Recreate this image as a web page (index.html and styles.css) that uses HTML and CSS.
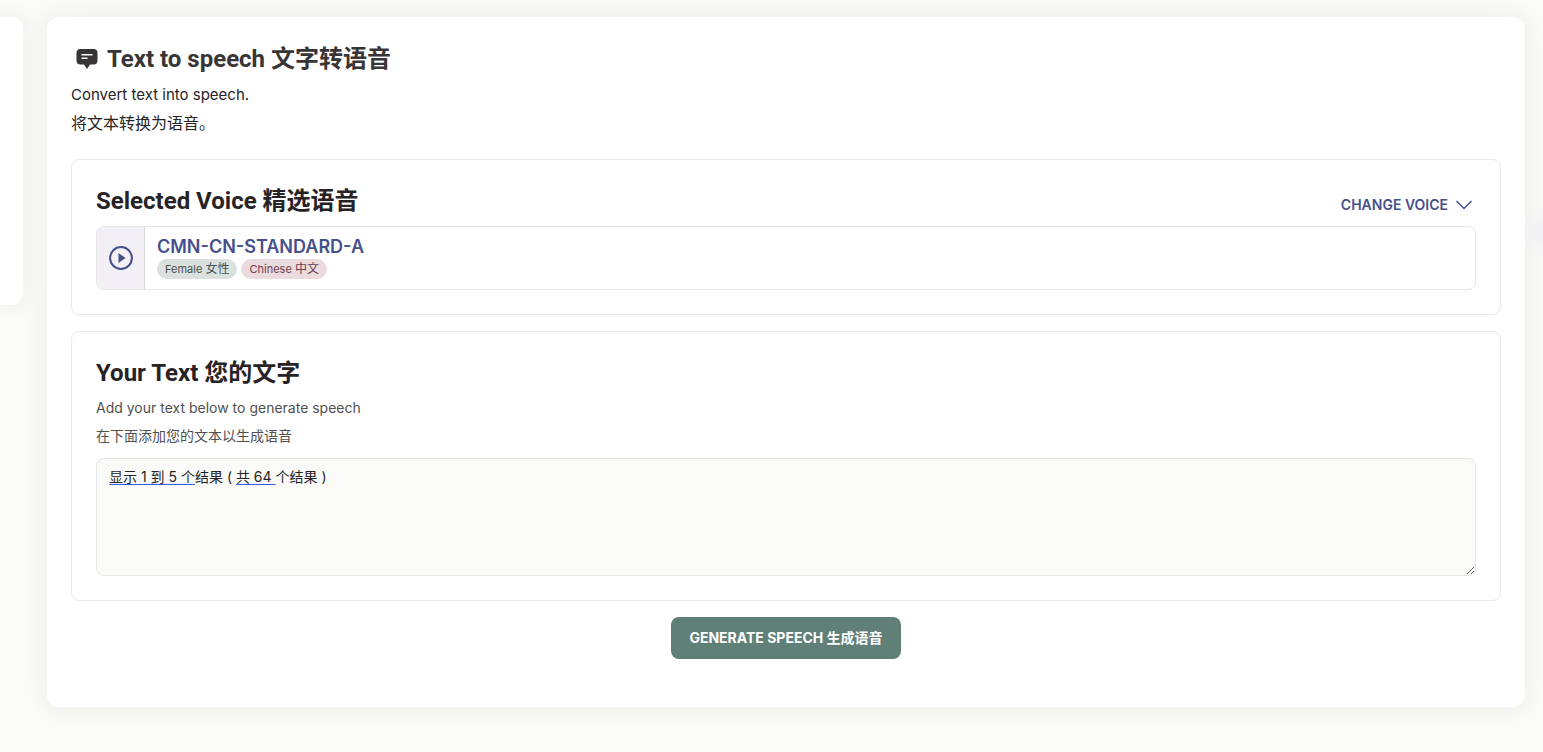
FILE: index.html
```html
<!DOCTYPE html>
<html lang="en">
<head>
<meta charset="utf-8">
<meta name="viewport" content="width=device-width, initial-scale=1">
<title>Text to speech</title>
<link rel="stylesheet" href="styles.css">
</head>
<body>
<div class="page">
  <aside class="side-panel" aria-label="Sidebar"></aside>
  <main class="card">
    <header class="intro">
      <h1 class="title">
        <svg class="title-icon" viewBox="0 0 22 20" aria-hidden="true">
          <path fill="currentColor" d="M4.500 0h13q4 0 4 4v7.500q0 4-4 4h-3.500l-3 4.500-3-4.500H4.500q-4 0-4-4V4q0-4 4-4z"/>
          <path fill="none" stroke="#fff" stroke-width="1.400" stroke-linecap="round" d="M6 5.700h10M6 9.200h5"/>
        </svg>
        <span>Text to speech 文字转语音</span>
      </h1>
      <p class="lead lead-latin">Convert text into speech.</p>
      <p class="lead">将文本转换为语音。</p>
    </header>

    <section class="panel">
      <div class="panel-head">
        <h2 class="heading">Selected Voice 精选语音</h2>
        <button class="change" type="button">CHANGE VOICE
          <svg class="chevron" viewBox="0 0 16 10" aria-hidden="true"><path d="M0.500 1 8 8.500 15.500 1"/></svg>
        </button>
      </div>
      <div class="voice">
        <button class="play" type="button" aria-label="Play voice sample">
          <svg class="play-icon" viewBox="0 0 24 24" aria-hidden="true">
            <circle cx="12" cy="12" r="10.900" fill="none" stroke="currentColor" stroke-width="2"/>
            <path fill="currentColor" d="M9.500 7v10l7-5z"/>
          </svg>
        </button>
        <div class="voice-info">
          <h3 class="voice-name">CMN-CN-STANDARD-A</h3>
          <div class="tags">
            <span class="tag tag-gender">Female <span class="tag-native">女性</span></span>
            <span class="tag tag-language">Chinese <span class="tag-native">中文</span></span>
          </div>
        </div>
      </div>
    </section>

    <section class="panel">
      <h2 class="heading">Your Text 您的文字</h2>
      <label class="hint" for="speech-text">Add your text below to generate speech<br>在下面添加您的文本以生成语音</label>
      <div class="editor">
        <textarea class="field" id="speech-text" spellcheck="false">显示 1 到 5 个结果 ( 共 64 个结果 )</textarea>
        <div class="marks" aria-hidden="true"><span class="mark">显示 1 到 5 个</span>结果 ( <span class="mark">共 64 </span>个结果 )</div>
      </div>
    </section>

    <button class="generate" type="button">GENERATE SPEECH 生成语音</button>
  </main>
  <div class="edge-glow" aria-hidden="true"></div>
</div>
</body>
</html>
```
FILE: styles.css
```css
* {
  box-sizing: border-box;
}

body {
  margin: 0;
  background: #fafaf8;
  color: #272324;
  font-family: Inter, "Noto Sans CJK SC", sans-serif;
  overflow-x: hidden;
}

h1, h2, h3, p {
  margin: 0;
}

button {
  border: 0;
  cursor: pointer;
  font-family: inherit;
}

.page {
  position: relative;
  display: flex;
  align-items: flex-start;
  gap: 24px;
  min-height: 100vh;
  padding: 17px 18px 45px 0;
  overflow: hidden;
}

.side-panel {
  flex: 0 0 23px;
  height: 288px;
  border-radius: 0 12px 12px 0;
  background: #fff;
  box-shadow: 0 0 24px rgba(40, 40, 30, 0.07);
}

.card {
  display: flex;
  flex: 1;
  flex-direction: column;
  gap: 16px;
  min-width: 0;
  padding: 24px 24px 48px;
  border-radius: 12px;
  background: #fff;
  box-shadow: 0 0 24px rgba(40, 40, 30, 0.07);
}

.intro {
  padding-bottom: 6px;
}

.title {
  display: flex;
  align-items: center;
  gap: 9px;
  padding-left: 5px;
  margin-bottom: 4px;
  color: #383536;
  font-family: Roboto, "Noto Sans CJK SC", sans-serif;
  font-size: 24px;
  font-weight: 700;
  line-height: 36px;
}

.title-icon {
  width: 22px;
  height: 20px;
}

.lead {
  font-size: 16px;
  line-height: 28px;
}

.lead-latin {
  font-size: 15px;
}

.panel {
  padding: 24px;
  border: 1px solid #e8e8e8;
  border-radius: 8px;
}

.panel-head {
  display: flex;
  justify-content: space-between;
  align-items: flex-end;
  margin-bottom: 8px;
}

.heading {
  font-family: Roboto, "Noto Sans CJK SC", sans-serif;
  font-size: 24px;
  font-weight: 700;
  line-height: 34px;
}

.change {
  display: flex;
  align-items: center;
  gap: 8px;
  padding: 4px;
  background: none;
  color: #46508c;
  font-size: 14px;
  font-weight: 600;
  line-height: 18px;
}

.chevron {
  width: 16px;
  height: 10px;
  fill: none;
  stroke: currentColor;
  stroke-width: 1.5;
}

.voice {
  display: flex;
  min-height: 64px;
  border: 1px solid #e5e5e5;
  border-radius: 8px;
  overflow: hidden;
}

.play {
  display: grid;
  place-items: center;
  width: 48px;
  padding: 0;
  border-right: 1px solid #d9d9dc;
  background: #f2f0f4;
  color: #46508c;
}

.play-icon {
  width: 24px;
  height: 24px;
}

.voice-info {
  padding: 8px 12px;
}

.voice-name {
  color: #46508c;
  font-size: 18px;
  font-weight: 600;
  line-height: 24px;
}

.tags {
  display: flex;
  gap: 4px;
}

.tag {
  padding: 0 8px;
  border-radius: 10px;
  font-size: 11px;
  line-height: 20px;
}

.tag-native {
  font-size: 12px;
}

.tag-gender {
  background: #dae0dd;
  color: #47514d;
}

.tag-language {
  background: #ebdade;
  color: #6d404b;
}

.hint {
  display: block;
  margin: 4px 0 8px;
  color: #514f50;
  font-size: 14px;
  line-height: 28px;
}

.editor {
  position: relative;
}

.field,
.marks {
  padding: 8px 12px;
  border: 1px solid #e5e5e5;
  border-radius: 8px;
  font-family: Inter, "Noto Sans CJK SC", sans-serif;
  font-size: 14px;
  line-height: 20px;
}

.field {
  display: block;
  width: 100%;
  height: 118px;
  background: #fafaf8;
  color: #272324;
  resize: vertical;
}

.marks {
  position: absolute;
  inset: 0;
  border-color: transparent;
  color: transparent;
  pointer-events: none;
}

.mark {
  text-decoration: underline 1px #3558e8;
  text-underline-offset: 2px;
  text-decoration-skip-ink: none;
}

.generate {
  align-self: center;
  padding: 0 18px;
  border-radius: 8px;
  background: #608077;
  color: #fff;
  font-size: 14px;
  font-weight: 700;
  line-height: 42px;
}

.edge-glow {
  position: absolute;
  top: 222px;
  right: -20px;
  width: 20px;
  height: 20px;
  border-radius: 10px;
  box-shadow: 0 0 24px rgba(70, 80, 200, 0.2);
}
```
